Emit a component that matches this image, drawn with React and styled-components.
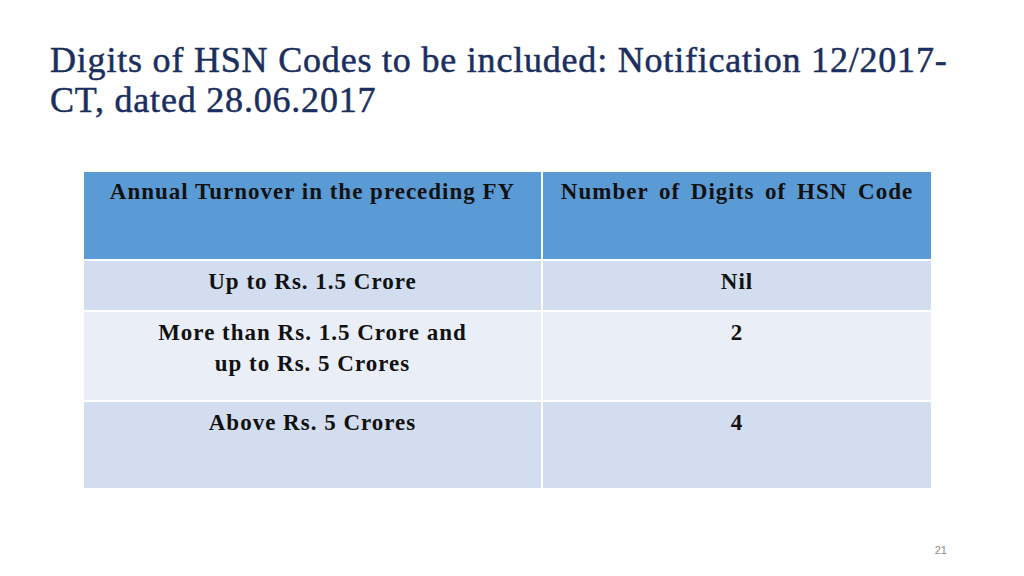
import React from 'react';
import styled, { createGlobalStyle } from 'styled-components';

const GlobalStyle = createGlobalStyle`
  html, body {
    margin: 0;
    padding: 0;
    background: #ffffff;
  }
`;

const Slide = styled.div`
  width: 1024px;
  height: 576px;
  box-sizing: border-box;
  padding: 40px 84px 0 50px;
  display: flex;
  flex-direction: column;
  font-family: 'Liberation Serif', 'DejaVu Serif', serif;
  overflow: hidden;
`;

const Title = styled.h1`
  margin: 0;
  font-size: 36px;
  font-weight: 400;
  line-height: 40px;
  letter-spacing: 0.8px;
  white-space: nowrap;
  color: #1b2f5e;
  -webkit-text-stroke: 0.5px #1b2f5e;
`;

const Table = styled.div`
  margin: 52px 0 0 34px;
  display: grid;
  grid-template-columns: 457px 388px;
  gap: 2px;
`;

const Cell = styled.div`
  height: ${(p) => p.h}px;
  box-sizing: border-box;
  padding-top: ${(p) => (p.head ? 4 : 5)}px;
  background: ${(p) => p.bg};
  color: #111111;
  font-size: 23px;
  font-weight: 700;
  line-height: 31px;
  letter-spacing: 1px;
  word-spacing: ${(p) => p.ws || 0}px;
  text-align: center;
`;

const PageNum = styled.div`
  margin-top: auto;
  align-self: flex-end;
  margin-right: -7px;
  margin-bottom: 20px;
  font-family: 'Liberation Sans', Arial, sans-serif;
  font-size: 11px;
  color: #8a8a8a;
`;

const rows = [
  { left: 'Up to Rs. 1.5 Crore', right: 'Nil', bg: '#d2deef', h: 49 },
  {
    left: (
      <>
        More than Rs. 1.5 Crore and
        <br />
        up to Rs. 5 Crores
      </>
    ),
    right: '2',
    bg: '#eaeff7',
    h: 88,
  },
  { left: 'Above Rs. 5 Crores', right: '4', bg: '#d2deef', h: 86 },
];

export default function App() {
  return (
    <>
      <GlobalStyle />
      <Slide>
        <Title>
          Digits of HSN Codes to be included: Notification 12/2017-
          <br />
          CT, dated 28.06.2017
        </Title>
        <Table>
          <Cell head bg="#5b9bd5" h={87}>
            Annual Turnover in the preceding FY
          </Cell>
          <Cell head bg="#5b9bd5" h={87} ws={4}>
            Number of Digits of HSN Code
          </Cell>
          {rows.map((r, i) => (
            <React.Fragment key={i}>
              <Cell bg={r.bg} h={r.h}>
                {r.left}
              </Cell>
              <Cell bg={r.bg} h={r.h}>
                {r.right}
              </Cell>
            </React.Fragment>
          ))}
        </Table>
        <PageNum>21</PageNum>
      </Slide>
    </>
  );
}
